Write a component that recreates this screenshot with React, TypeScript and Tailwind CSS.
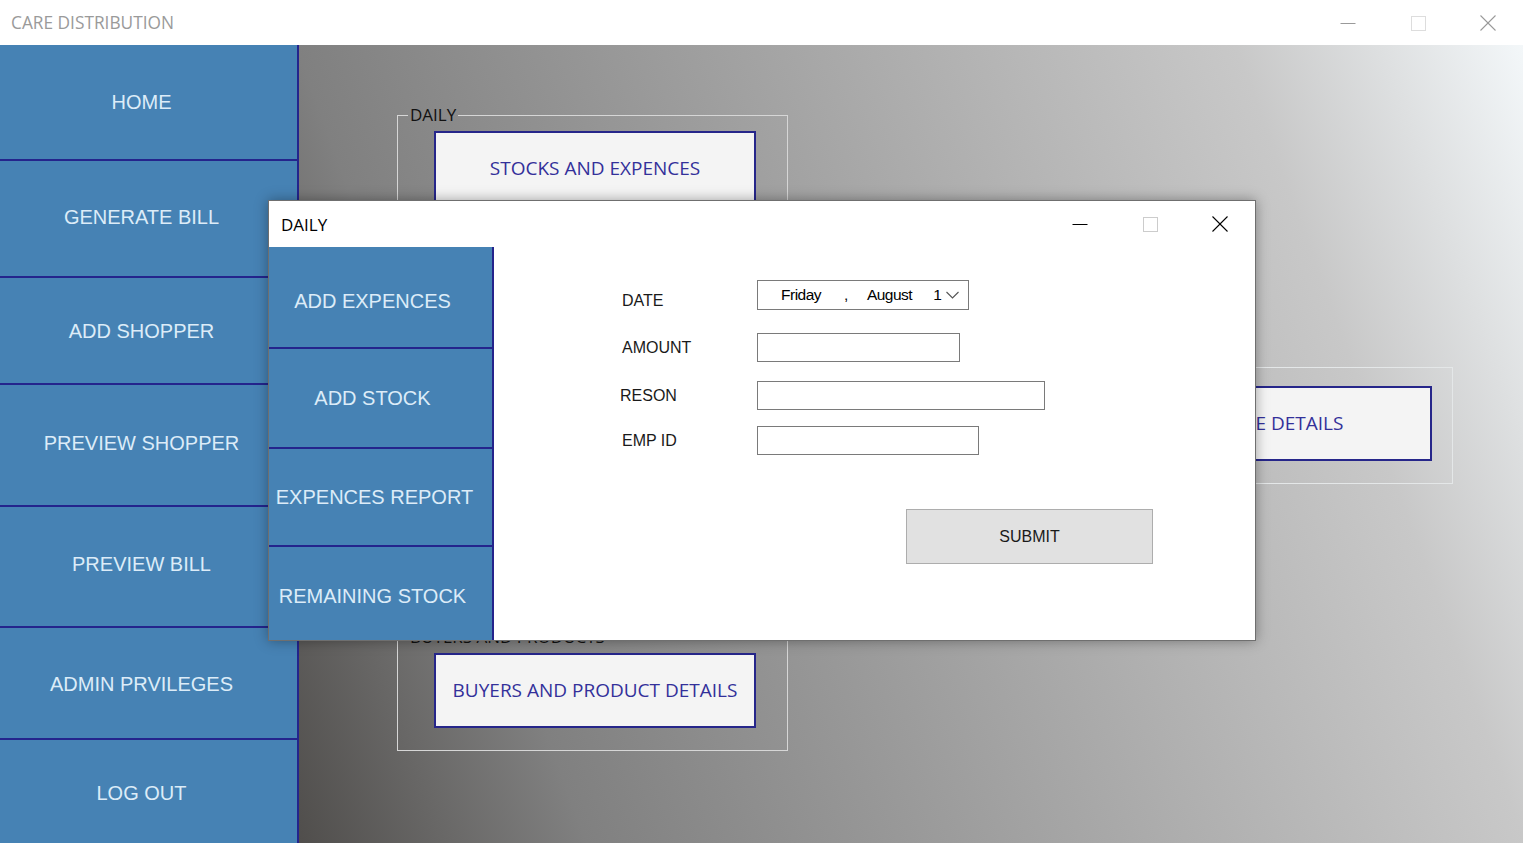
import React from "react";

const mainItems = [
  { label: "HOME", cls: "h-[116px] border-b-2" },
  { label: "GENERATE BILL", cls: "h-[117px] border-b-2 pb-[4px]" },
  { label: "ADD SHOPPER", cls: "h-[107px] border-b-2" },
  { label: "PREVIEW SHOPPER", cls: "h-[122px] border-b-2 pb-[4px]" },
  { label: "PREVIEW BILL", cls: "h-[121px] border-b-2 pb-[6px]" },
  { label: "ADMIN PRVILEGES", cls: "h-[112px] border-b-2 pt-[2px]" },
  { label: "LOG OUT", cls: "flex-1 pt-[2px]" },
];

const dlgItems = [
  { label: "ADD EXPENCES", cls: "h-[102px] border-b-2 pt-[7px]" },
  { label: "ADD STOCK", cls: "h-[100px] border-b-2" },
  { label: "EXPENCES REPORT", cls: "h-[98px] border-b-2 pl-[4px]" },
  { label: "REMAINING STOCK", cls: "flex-1 pt-[4px]" },
];

function WinControls({ dark }: { dark: boolean }) {
  const stroke = dark ? "#000000" : "#9a9a9a";
  const sq = dark ? "#cccccc" : "#dddddd";
  return (
    <div className="flex items-center h-full">
      <div className="w-[70px] h-full flex items-center justify-center">
        <svg width="16" height="16" viewBox="0 0 16 16">
          <line x1="0.5" y1="8.5" x2="15.5" y2="8.5" stroke={stroke} strokeWidth="1" />
        </svg>
      </div>
      <div className="w-[70px] h-full flex items-center justify-center">
        <svg width="16" height="16" viewBox="0 0 16 16">
          <rect x="1.5" y="1.5" width="14" height="14" fill="none" stroke={sq} strokeWidth="1" />
        </svg>
      </div>
      <div className="w-[70px] h-full flex items-center justify-center">
        <svg width="16" height="16" viewBox="0 0 16 16">
          <line x1="0.5" y1="0.5" x2="15.5" y2="15.5" stroke={stroke} strokeWidth="1.1" />
          <line x1="15.5" y1="0.5" x2="0.5" y2="15.5" stroke={stroke} strokeWidth="1.1" />
        </svg>
      </div>
    </div>
  );
}

function FormButton({ label, extra = "" }: { label: string; extra?: string }) {
  return (
    <div
      className={`w-[322px] h-[75px] bg-[#f4f4f4] border-2 border-[#26268a] flex items-center justify-center text-[19px] text-[#33309a] font-['Open_Sans',sans-serif] whitespace-nowrap ${extra}`}
    >
      {label}
    </div>
  );
}

export default function App() {
  return (
    <div className="relative w-[1523px] h-[843px] overflow-hidden bg-white flex flex-col">
      {/* title bar */}
      <div className="h-[45px] shrink-0 flex items-center justify-between bg-white">
        <span className="pl-[11px] text-[17.3px] text-[#9a9a9a] font-['Open_Sans',sans-serif] leading-none">
          CARE DISTRIBUTION
        </span>
        <WinControls dark={false} />
      </div>

      <div className="flex flex-1 min-h-0">
        {/* main sidebar */}
        <div className="w-[299px] shrink-0 bg-[#4682b4] border-r-2 border-[#24248c] flex flex-col">
          {mainItems.map((it) => (
            <div
              key={it.label}
              className={`${it.cls} border-[#24248c] flex items-center justify-center pr-[14px] text-[20px] text-[#dcecf8] font-['Liberation_Sans',Arial,sans-serif]`}
            >
              {it.label}
            </div>
          ))}
        </div>

        {/* background form area */}
        <div className="flex-1 flex bg-[linear-gradient(70deg,#504e4c_0%,#808080_19%,#c8c8c8_81%,#f3f7f9_100%)]">
          <div className="ml-[98px] w-[391px] flex flex-col">
            <fieldset className="mt-[60px] h-[240px] border border-[#d6d6d6] font-['Open_Sans',sans-serif]">
              <legend className="ml-[10px] px-[2px] text-[17px] leading-[20px] text-[#111]">DAILY</legend>
              <div className="ml-[36px] mt-[6px]">
                <FormButton label="STOCKS AND EXPENCES" />
              </div>
            </fieldset>
            <fieldset className="mt-[282px] h-[124px] border border-[#d6d6d6] font-['Open_Sans',sans-serif]">
              <legend className="ml-[10px] px-[2px] text-[17px] leading-[20px] text-[#111]">BUYERS AND PRODUCTS</legend>
              <div className="ml-[36px] mt-[6px]">
                <FormButton label="BUYERS AND PRODUCT DETAILS" />
              </div>
            </fieldset>
          </div>
          <div className="ml-[273px] mt-[322px] w-[392px] h-[117px] border border-[#e4e7e8] flex justify-end items-start pt-[18px] pr-[20px]">
            <FormButton label="PROFILE DETAILS" extra="pr-[6px]" />
          </div>
        </div>
      </div>

      {/* DAILY dialog */}
      <div className="absolute left-[268px] top-[200px] w-[988px] h-[441px] bg-white border border-[#6f6f6f] shadow-[0_0_12px_rgba(0,0,0,0.35)] flex flex-col">
        <div className="h-[46px] shrink-0 flex items-center justify-between">
          <span className="pl-[12px] text-[17px] text-black font-['Open_Sans',sans-serif] leading-none">DAILY</span>
          <WinControls dark={true} />
        </div>
        <div className="flex flex-1 min-h-0">
          <div className="w-[225px] shrink-0 bg-[#4682b4] border-r-2 border-[#24248c] flex flex-col">
            {dlgItems.map((it) => (
              <div
                key={it.label}
                className={`${it.cls} border-[#24248c] flex items-center justify-center pr-[16px] text-[20px] text-[#dcecf8] font-['Liberation_Sans',Arial,sans-serif] whitespace-nowrap`}
              >
                {it.label}
              </div>
            ))}
          </div>

          {/* form */}
          <div className="flex-1 flex flex-col pl-[126px] pt-[33px] font-['Liberation_Sans',Arial,sans-serif] text-[16px] text-[#1a1a1a]">
            <div className="flex items-center h-[30px]">
              <span className="w-[137px] pl-[2px] pt-[12px]">DATE</span>
              <div className="w-[212px] h-[30px] border border-[#7a7a7a] flex items-center text-[15.5px] text-black tracking-[-0.5px]">
                <span className="ml-[23px]">Friday</span>
                <span className="ml-[23px]">,</span>
                <span className="ml-[19px]">August</span>
                <span className="ml-[21px]">1</span>
                <svg className="ml-[5px]" width="13" height="8" viewBox="0 0 13 8">
                  <polyline points="0.5,1 6.5,7 12.5,1" fill="none" stroke="#555" strokeWidth="1.1" />
                </svg>
              </div>
            </div>
            <div className="flex items-center h-[29px] mt-[23px]">
              <span className="w-[137px] pl-[2px]">AMOUNT</span>
              <div className="w-[203px] h-[29px] border border-[#7a7a7a] bg-white" />
            </div>
            <div className="flex items-center h-[29px] mt-[19px]">
              <span className="w-[137px]">RESON</span>
              <div className="w-[288px] h-[29px] border border-[#7a7a7a] bg-white" />
            </div>
            <div className="flex items-center h-[29px] mt-[16px]">
              <span className="w-[137px] pl-[2px]">EMP ID</span>
              <div className="w-[222px] h-[29px] border border-[#7a7a7a] bg-white" />
            </div>
            <div className="ml-[286px] mt-[54px] w-[247px] h-[55px] bg-[#e1e1e1] border border-[#adadad] flex items-center justify-center text-[#1a1a1a]">
              SUBMIT
            </div>
          </div>
        </div>
      </div>
    </div>
  );
}
